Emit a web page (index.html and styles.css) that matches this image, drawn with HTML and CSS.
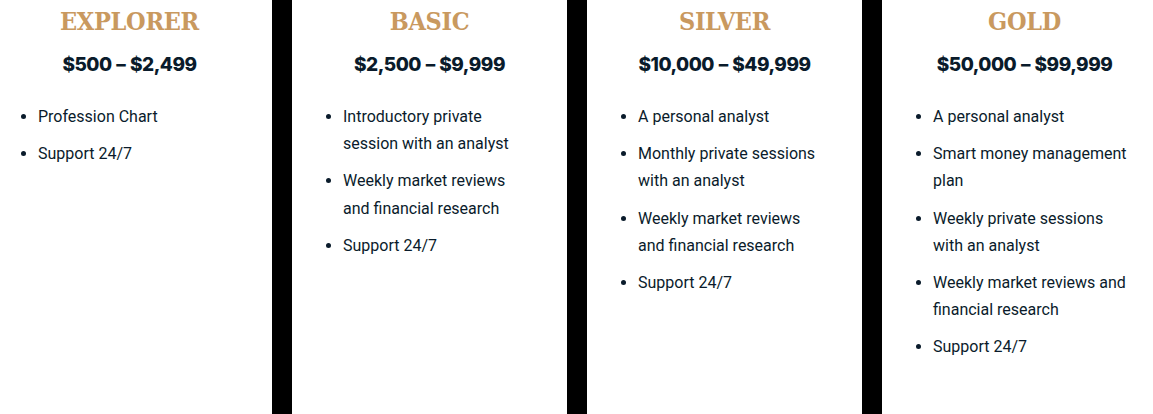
FILE: index.html
```html
<!DOCTYPE html>
<html lang="en">
<head>
<meta charset="utf-8">
<title>Plans</title>
<link rel="stylesheet" href="styles.css">
</head>
<body>
<div class="plans">
  <section class="plan plan-outer">
    <h2 class="plan-title">EXPLORER</h2>
    <p class="plan-price">$500 – $2,499</p>
    <ul class="plan-list">
      <li>Profession Chart</li>
      <li>Support 24/7</li>
    </ul>
  </section>
  <section class="plan">
    <h2 class="plan-title">BASIC</h2>
    <p class="plan-price">$2,500 – $9,999</p>
    <ul class="plan-list">
      <li>Introductory private session with an analyst</li>
      <li>Weekly market reviews and financial research</li>
      <li>Support 24/7</li>
    </ul>
  </section>
  <section class="plan">
    <h2 class="plan-title">SILVER</h2>
    <p class="plan-price">$10,000 – $49,999</p>
    <ul class="plan-list">
      <li>A personal analyst</li>
      <li>Monthly private sessions with an analyst</li>
      <li>Weekly market reviews and financial research</li>
      <li>Support 24/7</li>
    </ul>
  </section>
  <section class="plan plan-outer">
    <h2 class="plan-title">GOLD</h2>
    <p class="plan-price">$50,000 – $99,999</p>
    <ul class="plan-list">
      <li>A personal analyst</li>
      <li>Smart money management plan</li>
      <li>Weekly private sessions with an analyst</li>
      <li>Weekly market reviews and financial research</li>
      <li>Support 24/7</li>
    </ul>
  </section>
</div>
</body>
</html>
```

FILE: styles.css
```css
html, body {
  margin: 0;
  padding: 0;
  background: #000;
  overflow: hidden;
}
body {
  width: 1153px;
  height: 414px;
}
.plans {
  display: grid;
  grid-template-columns: 285px 275px 275px 285px;
  column-gap: 20px;
  margin-left: -13px;
  height: 414px;
}
.plan {
  background: #fff;
  padding: 0 40px 0 51px;
  color: #0a1b2b;
}
.plan-title {
  margin: 7px -40px 0 -51px;
  text-align: center;
  font-family: "DejaVu Serif Condensed", "DejaVu Serif", serif;
  font-stretch: condensed;
  font-weight: 700;
  font-size: 25px;
  letter-spacing: -0.3px;
  line-height: 30px;
  color: #c9995f;
}
.plan-price {
  margin: 15px -40px 0 -51px;
  text-align: center;
  font-family: Inter, sans-serif;
  font-weight: 800;
  font-size: 19px;
  letter-spacing: -0.5px;
  word-spacing: 1px;
  line-height: 26px;
}
.plan-list {
  margin: 25px 0 0;
  padding: 0;
  font-family: Roboto, sans-serif;
  font-size: 16px;
  line-height: 1.7;
}
.plan-list li {
  margin-bottom: 10px;
}
```
